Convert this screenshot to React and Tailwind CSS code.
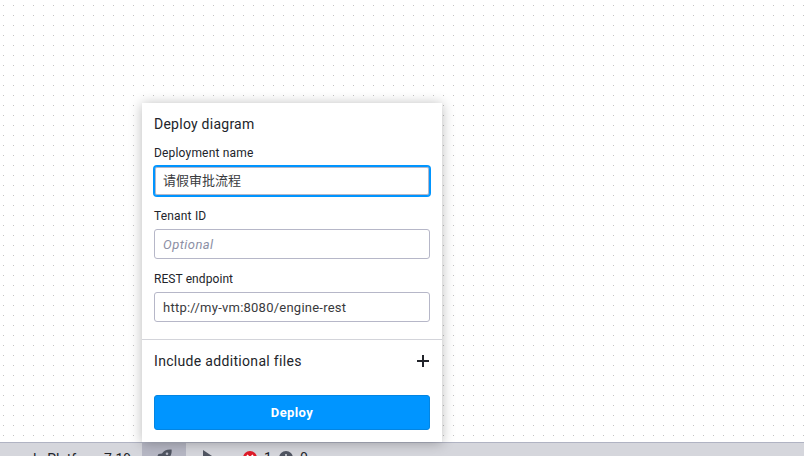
import React from "react";

const field = "h-[30px] w-[276px] rounded-[3px] border px-2 text-[13px] text-[#393a3d] bg-white";

function Field({ label, spacing, children }) {
  return (
    <div className="mb-[10px] flex flex-col">
      <div className={"mb-[3px] h-5 whitespace-nowrap text-[12px] leading-5 " + spacing}>{label}</div>
      {children}
    </div>
  );
}

function DeployPanel() {
  return (
    <div className="absolute left-[142px] top-[103px] flex h-[339px] w-[300px] flex-col bg-white text-[#22242a] shadow-[0_1px_12px_rgba(0,0,0,0.28)]">
      <div className="flex h-[236px] flex-col px-3 pt-[11px]">
        <div className="mb-[8px] h-[21px] whitespace-nowrap text-[14px] leading-[21px] tracking-[0.25px]">Deploy diagram</div>
        <Field label="Deployment name" spacing="tracking-[0.18px]">
          <div className={field + " leading-[28px] border-[#0095ff] shadow-[0_0_0_1px_#0095ff,inset_0_0_0_1px_#b6b7c8]"}>请假审批流程</div>
        </Field>
        <Field label="Tenant ID" spacing="tracking-[0.18px]">
          <div className={field + " leading-[30px] border-[#b6b7c8]"}><span className="italic tracking-[0.45px] text-[#8c8fa5]">Optional</span></div>
        </Field>
        <Field label="REST endpoint" spacing="tracking-[0.08px]">
          <div className={field + " leading-[30px] border-[#b6b7c8]"}><span className="tracking-[0.24px]">http://my-vm:8080/engine-rest</span></div>
        </Field>
      </div>
      <div className="flex h-[45px] items-center justify-between border-t border-[#d3d4da] px-3 pb-[2px]">
        <span className="whitespace-nowrap text-[14px] leading-5 tracking-[0.32px]">Include additional files</span>
        <svg width="14" height="14" viewBox="0 0 14 14"><path d="M7 1v12M1 7h12" stroke="#22242a" strokeWidth="2" /></svg>
      </div>
      <button className="mx-3 mt-[11px] h-[35px] rounded-[3px] border border-[#0385e2] bg-[#0095ff] text-[13px] font-bold tracking-[0.4px] text-white">Deploy</button>
    </div>
  );
}

export default function App() {
  return (
    <div className="relative flex h-[456px] w-[804px] flex-col overflow-hidden bg-white font-['Roboto','Noto_Sans_CJK_SC',sans-serif]">
      <svg className="shrink-0" width="804" height="442" shapeRendering="crispEdges">
        <defs>
          <pattern id="grid" width="10" height="10" patternUnits="userSpaceOnUse">
            <rect x="3" y="5" width="1" height="1" fill="#c4c4c4" />
          </pattern>
        </defs>
        <rect width="804" height="442" fill="url(#grid)" />
      </svg>
      <div className="flex h-[34px] shrink-0 border-t border-[#b0b3c3] bg-[#d5d6dc] text-[14px] leading-[30px] text-[#22242a]">
        <div className="flex w-[142px] shrink-0 justify-end overflow-hidden whitespace-nowrap pr-[11px] leading-[32px] tracking-[-0.1px]">Camunda Platform 7.19</div>
        <div className="flex w-[44px] justify-center bg-[#b6b7c4] pt-[6px]">
          <svg width="16" height="16" viewBox="0 0 16 16" fill="#505562"><path d="M15.6.5C11 0 8 1.500 6 4.500L2.500 5 .4 9l3.400-.3L7.300 12.300 7 15.600l4-2.100.5-3.500C14.500 8 16 5 15.600.5Z" /><circle cx="11" cy="4.700" r="1.300" fill="#b6b7c4" /></svg>
        </div>
        <div className="w-[57px] pl-[17px] pt-[7px]">
          <svg width="12" height="16" viewBox="0 0 12 16" fill="#505562"><path d="M0 0l12 8-12 8z" /></svg>
        </div>
        <div className="flex gap-[7px]">
          <svg className="mt-[8px]" width="14" height="14" viewBox="0 0 14 14"><circle cx="7" cy="7" r="7" fill="#df1b29" /><path d="M4 4l6 6M10 4l-6 6" stroke="#fff" strokeWidth="1.600" /></svg>
          <span className="w-[8px]">1</span>
          <svg className="mt-[8px]" width="14" height="14" viewBox="0 0 14 14"><circle cx="7" cy="7" r="7" fill="#505562" /><path d="M7 3v5M7 9.500v2" stroke="#d5d6dc" strokeWidth="1.600" /></svg>
          <span>0</span>
        </div>
      </div>
      <DeployPanel />
    </div>
  );
}
